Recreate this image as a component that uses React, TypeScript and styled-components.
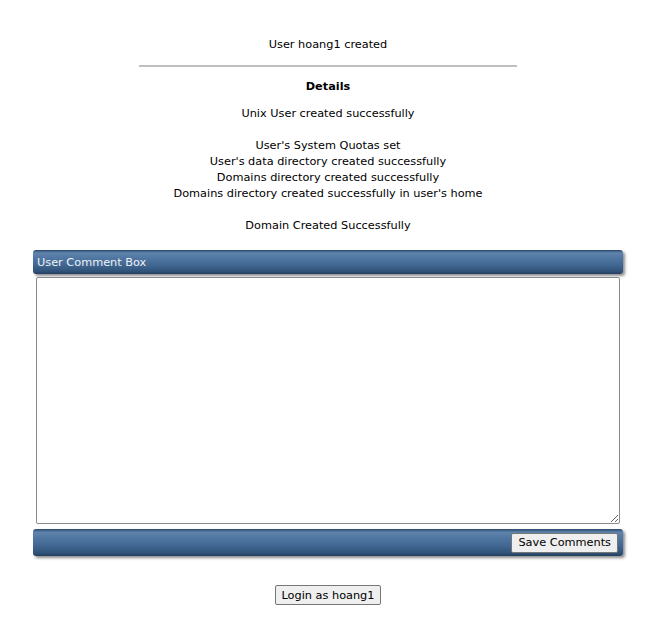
import React from "react";
import styled, { createGlobalStyle } from "styled-components";

const Global = createGlobalStyle`
  html, body { margin: 0; padding: 0; background: #fff; }
  body { font-family: "DejaVu Sans", Verdana, sans-serif; font-size: 11.3px; color: #000; }
`;

const Page = styled.div`
  width: 600px;
  margin: 0 auto;
  padding: 37px 0 0 0;
  display: flex;
  flex-direction: column;
  align-items: center;
  transform: translateX(-4px);
`;

const Line = styled.div`
  line-height: 16px;
  text-align: center;
  white-space: nowrap;
`;

const Title = styled(Line)``;

const Rule = styled.hr`
  width: 378px;
  height: 0;
  border: 0;
  border-top: 2px solid #c0c0c0;
  margin: 12px 0 12px 0;
`;

const Heading = styled(Line)`
  font-weight: bold;
  margin-bottom: 11px;
`;

const Block = styled.div`
  display: flex;
  flex-direction: column;
  align-items: center;
  margin-bottom: 16px;
`;

const Panel = styled.div`
  width: 590px;
  display: flex;
  flex-direction: column;
  align-items: stretch;
`;

const Bar = styled.div<{ $h: number }>`
  height: ${(p) => p.$h}px;
  border-radius: 3px;
  background: linear-gradient(
    to bottom,
    #2b4868 0%,
    #5f84ad 12%,
    #4f76a1 35%,
    #3f6590 65%,
    #2f5176 90%,
    #233d5c 100%
  );
  box-shadow: 2px 2px 3px rgba(0, 0, 0, 0.45);
  display: flex;
  align-items: center;
  padding: 0 4px;
  box-sizing: border-box;
`;

const BarTitle = styled.span`
  color: #eef2f6;
  font-size: 11.3px;
`;

const BottomBar = styled(Bar)`
  justify-content: flex-end;
  padding: 0 5px 0 0;
  margin-top: 5px;
`;

const Comment = styled.textarea`
  display: block;
  width: 584px;
  height: 247px;
  margin: 3px 0 0 3px;
  box-sizing: border-box;
  border: 1px solid #8a8a8a;
  border-radius: 2px;
  resize: both;
  font-family: "DejaVu Sans Mono", monospace;
`;

const Btn = styled.button`
  font-family: "DejaVu Sans", Verdana, sans-serif;
  font-size: 11.3px;
  color: #000;
  background: #efefef;
  border: 1px solid #767676;
  border-radius: 2px;
  padding: 1px 6px;
  height: 20px;
`;

const LoginWrap = styled.div`
  margin-top: 29px;
`;

export default function App() {
  return (
    <>
      <Global />
      <Page>
        <Title>User hoang1 created</Title>
        <Rule />
        <Heading>Details</Heading>
        <Block>
          <Line>Unix User created successfully</Line>
        </Block>
        <Block>
          <Line>User's System Quotas set</Line>
          <Line>User's data directory created successfully</Line>
          <Line>Domains directory created successfully</Line>
          <Line>Domains directory created successfully in user's home</Line>
        </Block>
        <Block>
          <Line>Domain Created Successfully</Line>
        </Block>
        <Panel>
          <Bar $h={24}>
            <BarTitle>User Comment Box</BarTitle>
          </Bar>
          <Comment />
          <BottomBar $h={27}>
            <Btn>Save Comments</Btn>
          </BottomBar>
        </Panel>
        <LoginWrap>
          <Btn>Login as hoang1</Btn>
        </LoginWrap>
      </Page>
    </>
  );
}
